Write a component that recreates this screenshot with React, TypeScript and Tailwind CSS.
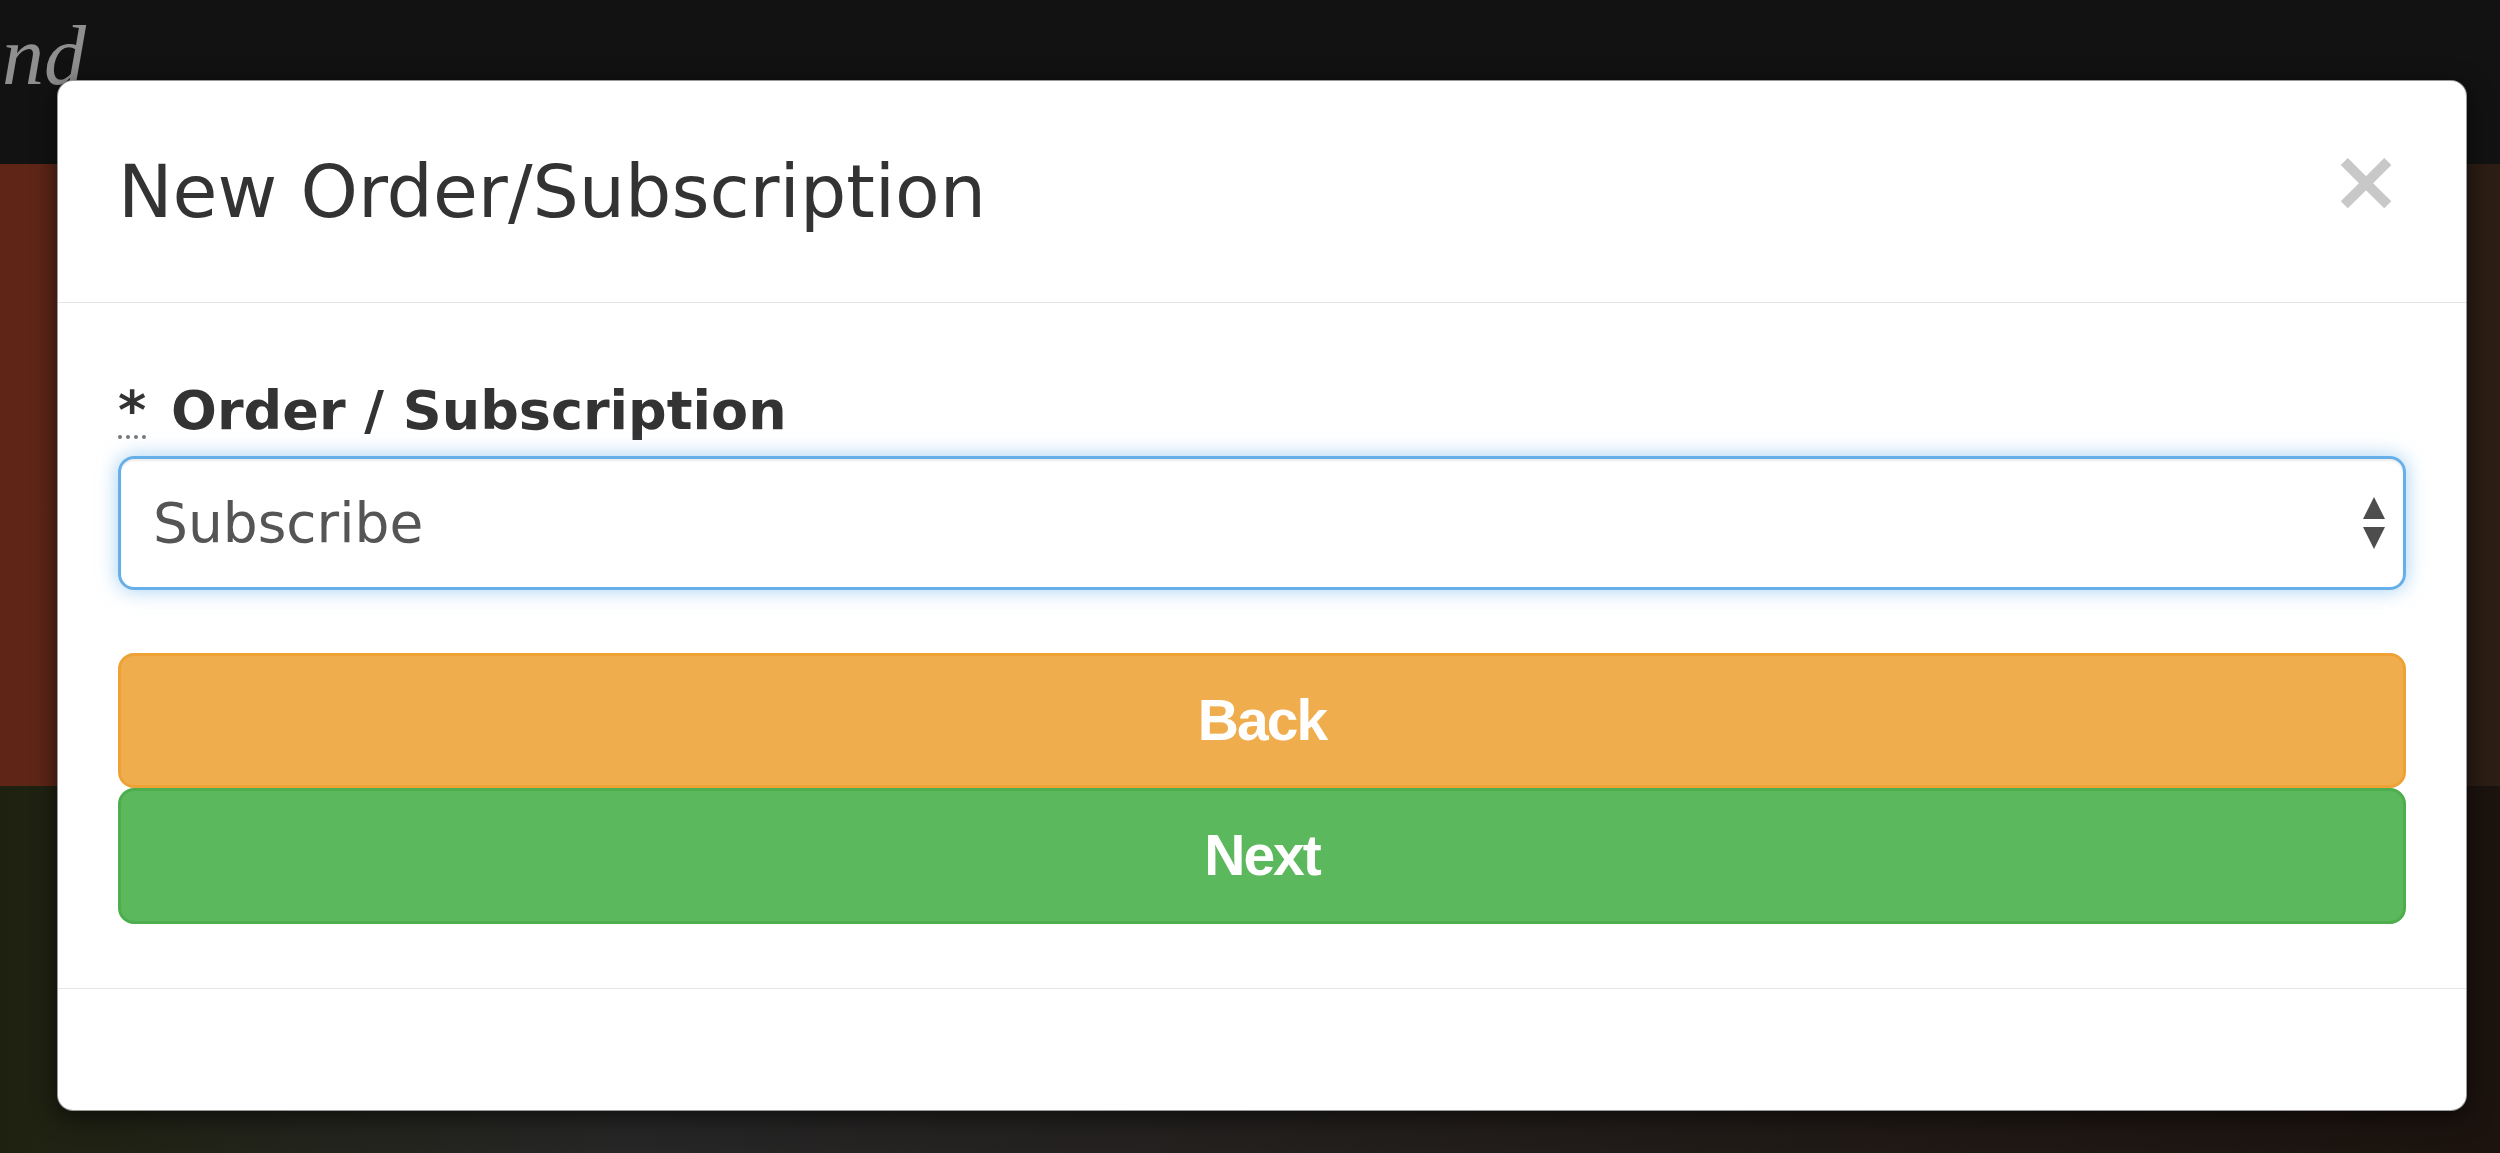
import React from "react";

const SelectArrows = () => (
  <svg width="28" height="56" viewBox="0 0 28 56" className="shrink-0">
    <polygon points="14,2 25,24 3,24" fill="#4d4d4d" />
    <polygon points="3,32 25,32 14,54" fill="#4d4d4d" />
  </svg>
);

const Backdrop = () => (
  <div className="flex flex-col w-full h-full">
    <div className="h-[164px] bg-[#121212] overflow-hidden">
      <span className="block ml-[2px] mt-[14px] text-[84px] leading-none italic text-[#8f8f8f] font-['Liberation_Serif',serif]">
        nd
      </span>
    </div>
    <div className="h-[622px] bg-linear-to-r from-[#5f2617] via-[#3e2218] to-[#2c1d15]" />
    <div className="flex-1 bg-linear-to-r from-[#1f2110] via-[#262626] via-25% to-[#1c130e]" />
  </div>
);

const OrderModal = () => (
  <div className="absolute left-[57px] top-[80px] w-[2410px] h-[1031px] flex flex-col bg-white rounded-[16px] border border-black/40 shadow-[0_6px_24px_rgba(0,0,0,0.6)] overflow-hidden font-['DejaVu_Sans',sans-serif] text-[#333]">
    <div className="h-[222px] shrink-0 flex items-center justify-between pl-[60px] pr-[64px] border-b border-[#e5e5e5]">
      <h4 className="text-[73px] leading-none">New Order/Subscription</h4>
      <button className="text-[86px] leading-none font-bold text-[#c8c8c8] -mt-[24px]">×</button>
    </div>
    <div className="flex flex-col px-[60px] pt-[68px] pb-[64px] border-b border-[#e5e5e5]">
      <label className="block text-[54px] leading-[80px] font-bold mb-[5px]">
        <abbr className="no-underline border-b-[4px] border-dotted border-[#777] leading-[48px] inline-block mr-[6px]">*</abbr>{" "}
        Order / Subscription
      </label>
      <div className="h-[134px] flex items-center justify-between pl-[32px] pr-[15px] rounded-[16px] border-[3px] border-[#66afe9] shadow-[inset_0_2px_2px_rgba(0,0,0,0.075),0_0_20px_rgba(102,175,233,0.6)]">
        <span className="text-[55px] text-[#555]">Subscribe</span>
        <SelectArrows />
      </div>
      <div className="flex flex-col mt-[63px] font-['Liberation_Sans',sans-serif]">
        <button className="h-[135px] rounded-[16px] bg-[#f0ad4e] border-[3px] border-[#eea236] text-white font-bold text-[57px] tracking-[-2px]">
          Back
        </button>
        <button className="h-[136px] rounded-[16px] bg-[#5cb85c] border-[3px] border-[#4cae4c] text-white font-bold text-[57px] tracking-[-2px]">
          Next
        </button>
      </div>
    </div>
    <div className="flex-1" />
  </div>
);

export default function App() {
  return (
    <div className="relative w-[2500px] h-[1153px] overflow-hidden">
      <Backdrop />
      <OrderModal />
    </div>
  );
}
